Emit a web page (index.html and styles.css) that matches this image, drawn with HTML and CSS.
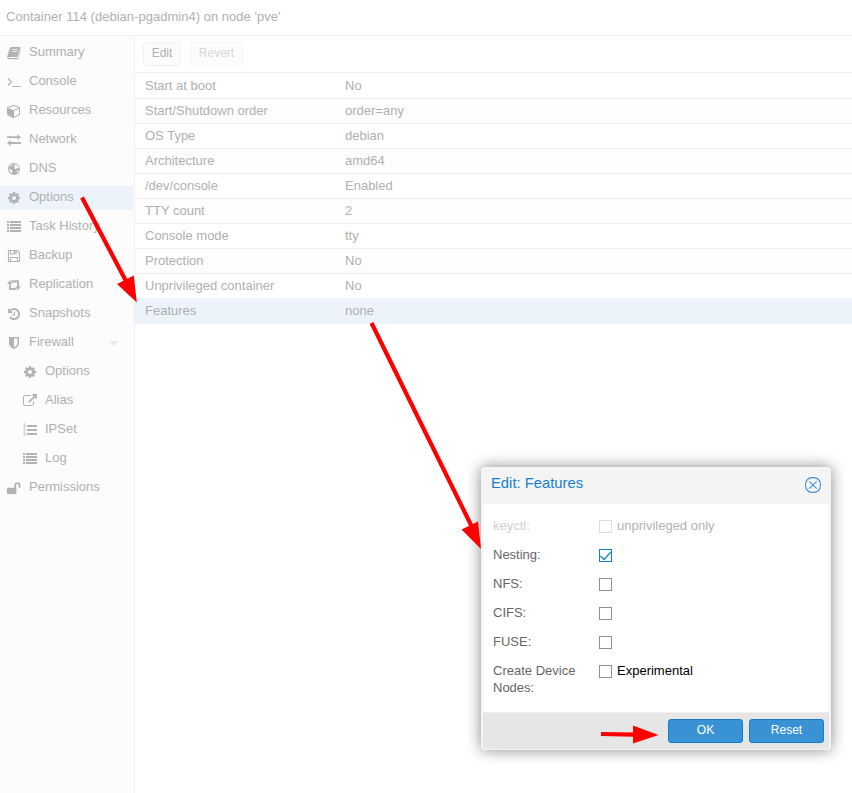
FILE: index.html
```html
<!DOCTYPE html>
<html lang="en">
<head>
<meta charset="utf-8">
<title>Container 114 (debian-pgadmin4) on node 'pve'</title>
<link rel="stylesheet" href="styles.css">
</head>
<body>
<header class="title">Container 114 (debian-pgadmin4) on node 'pve'</header>
<div class="main">
  <nav class="side">
    <a class="item"><svg class="ico" viewBox="0 0 14 14"><path d="M4.600 1h8.200q.8.200.6 1l-2.400 8q-.3.900-1.200.900H2.300q-.9 0-.8.600.1.500.9.500h8q.6 0 .8-.6L13.500 4q.4 0 .2.900l-2.300 7.500q-.3.800-1.200.800H2Q.5 13 .3 11.500V10L2.900 2q.3-1 1.700-1z"/><path class="cut" d="M5.200 3.500h5.600M4.600 5.500h5.600"/></svg>Summary</a>
    <a class="item"><svg class="ico" viewBox="0 0 14 14"><path class="line thin" d="M.8 3.500l3.800 3.500-3.800 3.500M5.500 11.500H13.800"/></svg>Console</a>
    <a class="item"><svg class="ico" viewBox="0 0 1792 1792"><path d="M896 1629l640-349v-636l-640 233v752zm-64-865l698-254-698-254-698 254zm832-252v768q0 35-18 65t-49 47l-704 384q-28 16-61 16t-61-16l-704-384q-31-17-49-47t-18-65v-768q0-40 23-73t61-47l704-256q22-8 44-8t44 8l704 256q38 14 61 47t23 73z"/></svg>Resources</a>
    <a class="item"><svg class="ico" viewBox="0 0 14 14"><path d="M0 3.200h10.500V1.200L14 4l-3.500 2.900V5H0zM14 11H3.500v2L0 10l3.500-2.900v2H14z"/></svg>Network</a>
    <a class="item"><svg class="ico" viewBox="0 0 14 14"><circle cx="7" cy="7" r="6"/><path class="land" d="M7.500 1.800l2.800.9 1.600 2.100-.2 1.500-1.500-.3-1.200 1-1.600-.6-.4-1.500 1.200-1.200-1-.7zM3.200 3.200l1.800-.8.400 1-1.300 1.200zM1.800 6.500l2.500 1.200 1.300 1.500-1 2.600-1.200-.9-.3-1.900-1.300-1.300zM10.200 8.300l1.600.2-.8 1.800-1.300.5z"/></svg>DNS</a>
    <a class="item on"><svg class="ico" viewBox="0 0 1792 1792"><use href="#cog"/></svg>Options</a>
    <a class="item"><svg class="ico" viewBox="0 0 14 14"><use href="#list"/></svg>Task History</a>
    <a class="item"><svg class="ico" viewBox="0 0 14 14"><path class="line" d="M1.500 1.500h8.500L12.500 4V12.500H1.500zM3.500 1.500v3.500h5.500V1.500M3.500 12.500V8.500h7v4"/><path d="M6.500 2h1.500v2.500H6.500z"/></svg>Backup</a>
    <a class="item"><svg class="ico" viewBox="0 0 14 14"><path d="M2.900 2.300L5.800 6H3.900V10h4.700l1.700 2.100H2.500Q2 12.100 2 11.600V6H0zM11.100 12.100L8.200 8.400h1.900V4.400H5.400L3.700 2.300h7.800q.5 0 .5.500v5.600h2z"/></svg>Replication</a>
    <a class="item"><svg class="ico" viewBox="0 0 1792 1792"><path d="M1664 896q0 156-61 298t-164 245-245 164-298 61q-172 0-327-72.500t-264-204.500q-7-10-6.500-22.500t8.500-20.500l137-138q10-9 25-9 16 2 23 12 73 95 179 147t225 52q104 0 198.500-40.500t163.500-109.500 109.500-163.500 40.500-198.500-40.500-198.500-109.500-163.500-163.500-109.500-198.500-40.500q-98 0-188 35.500t-160 101.500l137 138q31 30 14 69-17 40-59 40h-448q-26 0-45-19t-19-45v-448q0-42 40-59 39-17 69 14l130 129q107-101 244.500-156.500t284.500-55.500q156 0 298 61t245 164 164 245 61 298zm-640-288v448q0 14-9 23t-23 9h-320q-14 0-23-9t-9-23v-64q0-14 9-23t23-9h224v-352q0-14 9-23t23-9h64q14 0 23 9t9 23z"/></svg>Snapshots</a>
    <a class="item"><svg class="ico" viewBox="0 0 1792 1792"><path d="M1344 960v-640h-448v1137q119-63 213-137 235-184 235-360zm192-768v768q0 86-33.500 170.500t-83 150-118 127.500-126.500 103-121 77.500-89.500 49.500-42.500 20q-12 6-26 6t-26-6q-16-7-42.500-20t-89.500-49.500-121-77.500-126.500-103-118-127.500-83-150-33.500-170.500v-768q0-26 19-45t45-19h1152q26 0 45 19t19 45z"/></svg>Firewall<i class="caret"></i></a>
    <a class="item sub"><svg class="ico" viewBox="0 0 1792 1792"><use href="#cog"/></svg>Options</a>
    <a class="item sub"><svg class="ico" viewBox="0 0 1792 1792"><path d="M1408 928v320q0 119-84.500 203.500t-203.500 84.500h-832q-119 0-203.500-84.500t-84.500-203.500v-832q0-119 84.500-203.500t203.500-84.500h704q14 0 23 9t9 23v64q0 14-9 23t-23 9h-704q-66 0-113 47t-47 113v832q0 66 47 113t113 47h832q66 0 113-47t47-113v-320q0-14 9-23t23-9h64q14 0 23 9t9 23zm384-864v512q0 26-19 45t-45 19-45-19l-176-176-652 652q-10 10-23 10t-23-10l-114-114q-10-10-10-23t10-23l652-652-176-176q-19-19-19-45t19-45 45-19h512q26 0 45 19t19 45z"/></svg>Alias</a>
    <a class="item sub"><svg class="ico" viewBox="0 0 14 14"><path d="M4 2h10v2H4zM4 6h10v2H4zM4 10h10v2H4z"/><path class="line fine" d="M.4 1L1.500.4v3M.3 3.500h2.400M.3 5.400q1-.8 1.900 0 .3.800-1.900 2.500h2.400M.3 9.900h2.100L1.300 11.300q1.300.1 1.100 1.200-.6 1-2.200.3"/></svg>IPSet</a>
    <a class="item sub"><svg class="ico" viewBox="0 0 14 14"><use href="#list"/></svg>Log</a>
    <a class="item"><svg class="ico" viewBox="0 0 14 14"><path d="M0 7.500q0-.7.700-.7H7.300V4.500Q7.300 1.200 10.400 1.200t3.100 3.300v1.800q0 .5-.5.500h-.8q-.5 0-.5-.5V4.500q0-1.500-1.300-1.500T9.100 4.500V7q.3.200.3.600v4.700q0 .7-.7.700H.7q-.7 0-.7-.7z"/></svg>Permissions</a>
  </nav>
  <section class="content">
    <div class="bar"><span class="tool">Edit</span><span class="tool off">Revert</span></div>
    <div class="grid">
      <div class="row"><span>Start at boot</span><span>No</span></div>
      <div class="row"><span>Start/Shutdown order</span><span>order=any</span></div>
      <div class="row"><span>OS Type</span><span>debian</span></div>
      <div class="row"><span>Architecture</span><span>amd64</span></div>
      <div class="row"><span>/dev/console</span><span>Enabled</span></div>
      <div class="row"><span>TTY count</span><span>2</span></div>
      <div class="row"><span>Console mode</span><span>tty</span></div>
      <div class="row"><span>Protection</span><span>No</span></div>
      <div class="row"><span>Unprivileged container</span><span>No</span></div>
      <div class="row on"><span>Features</span><span>none</span></div>
    </div>
  </section>
</div>

<div class="dialog">
  <div class="head">Edit: Features
    <svg class="close" viewBox="0 0 16 16"><rect x=".6" y=".6" width="14.800" height="14.800" rx="6.500"/><path d="M4.300 4.300l7.400 7.400M11.700 4.300l-7.400 7.400"/></svg>
  </div>
  <div class="form">
    <div class="field off"><label>keyctl:</label><i class="box"></i><span>unprivileged only</span></div>
    <div class="field"><label>Nesting:</label><i class="box checked"><svg viewBox="0 0 11 11"><path d="M.3 6l3.700 3.500L10.900 2"/></svg></i></div>
    <div class="field"><label>NFS:</label><i class="box"></i></div>
    <div class="field"><label>CIFS:</label><i class="box"></i></div>
    <div class="field"><label>FUSE:</label><i class="box"></i></div>
    <div class="field"><label>Create Device Nodes:</label><i class="box"></i><span>Experimental</span></div>
  </div>
  <div class="foot"><span class="btn">OK</span><span class="btn">Reset</span></div>
</div>

<svg class="arrows" viewBox="0 0 852 793">
  <path class="shaft" d="M82 197.500L126.500 282M371.500 323L472.500 528M601 734L635 734.700"/>
  <path d="M117 284L133.800 275.500 136.800 302.500zM461.500 529.500L478 521.500 481 549zM633 725.500L658.500 735 633 743.500z"/>
</svg>

<svg class="defs">
  <defs>
    <path id="cog" d="M1152 896q0-106-75-181t-181-75-181 75-75 181 75 181 181 75 181-75 75-181zm512-109v222q0 12-8 23t-20 13l-185 28q-19 54-39 91 35 50 107 138 10 12 10 25t-9 23q-27 37-99 108t-94 71q-12 0-26-9l-138-108q-44 23-91 38-16 136-29 186-7 28-36 28h-222q-14 0-24.500-8.500t-11.500-21.500l-28-184q-49-16-90-37l-141 107q-10 9-25 9-14 0-25-11-126-114-165-168-7-10-7-23 0-12 8-23 15-21 51-66.500t54-70.500q-27-50-41-99l-183-27q-13-2-21-12.500t-8-23.500v-222q0-12 8-23t19-13l186-28q14-46 39-92-40-57-107-138-10-12-10-24 0-10 9-23 26-36 98.500-107.500t94.500-71.500q13 0 26 10l138 107q44-23 91-38 16-136 29-186 7-28 36-28h222q14 0 24.500 8.500t11.500 21.500l28 184q49 16 90 37l142-107q9-9 24-9 13 0 25 10 129 119 165 170 7 8 7 22 0 12-8 23-15 21-51 66.500t-54 70.500q26 50 41 98l183 28q13 2 21 12.500t8 23.500z"/>
    <path id="list" d="M0 1h2v2H0zM3 1h11v2H3zM0 4h2v2H0zM3 4h11v2H3zM0 7h2v2H0zM3 7h11v2H3zM0 10h2v2H0zM3 10h11v2H3z"/>
  </defs>
</svg>
</body>
</html>
```
FILE: styles.css
```css
* { box-sizing: border-box; }
body {
  margin: 0;
  width: 852px;
  height: 793px;
  position: relative;
  overflow: hidden;
  display: flex;
  flex-direction: column;
  background: #fff;
  color: #b0b0b0;
  font: 13px/17px "Liberation Sans", Arial, sans-serif;
}
.title { height: 36px; padding: 8px 6px; border-bottom: 1px solid #efefef; letter-spacing: .02px; }
.main { flex: 1; display: flex; }
.side {
  width: 135px;
  padding-top: 5px;
  background: #fcfcfc;
  border-right: 1px solid #efefef;
}
.item {
  display: flex;
  height: 24px;
  width: 133px;
  margin-bottom: 5px;
  padding: 2px 0 0 7px;
  white-space: nowrap;
}
.item.on, .row.on { background: #ecf3fa; }
.sub { padding-left: 23px; }
.ico { width: 14px; height: 14px; margin: 3px 8px 0 0; fill: #b3b3b3; flex: none; }
.line { fill: none; stroke: #b3b3b3; stroke-width: 1.1; }
.thin { stroke-width: 1.2; }
.fine { stroke-width: .7; }
.cut { fill: none; stroke: #fcfcfc; stroke-width: .8; }
.land { fill: #f4f4f4; }
.caret {
  margin: 8px 14px 0 auto;
  width: 0;
  height: 0;
  border: 5px solid transparent;
  border-top-color: #ebebeb;
  border-bottom: 0;
}
.content { flex: 1; }
.bar { height: 37px; padding: 6px 8px; display: flex; gap: 9px; border-bottom: 1px solid #efefef; }
.tool {
  width: 38px;
  height: 24px;
  padding-top: 2px;
  border: 1px solid #f1f1f1;
  border-radius: 3px;
  background: #fcfcfc;
  font-size: 12px;
  text-align: center;
}
.tool.off { width: 53px; color: #d7d7d7; border-color: #f6f6f6; }
.row {
  height: 25px;
  padding: 3px 10px 0;
  display: grid;
  grid-template-columns: 200px 1fr;
  border-bottom: 1px solid #efefef;
}
.row:first-child { height: 26px; padding-top: 4px; }
.row:nth-child(even):not(.on) { background: #fdfdfd; }
.row:nth-last-child(2), .row.on { border-color: #ecf3fa; }
.dialog {
  position: absolute;
  left: 481px;
  top: 467px;
  width: 350px;
  height: 283px;
  display: flex;
  flex-direction: column;
  border: 2px solid #f4f4f4;
  border-width: 0 2px 1px;
  border-radius: 4px;
  overflow: hidden;
  background: #fff;
  color: #666;
  box-shadow: 0 0 15px #888;
}
.head {
  height: 37px;
  padding: 7px 8px;
  display: flex;
  justify-content: space-between;
  background: #f4f4f4;
  color: #157fcc;
  font-size: 14.800px;
  line-height: 18px;
}
.close { width: 16px; height: 16px; margin-top: 3px; fill: none; stroke: #4593ce; stroke-width: 1.1; }
.form { flex: 1; padding: 10px; }
.field { height: 29px; display: flex; padding-top: 3px; color: #666; }
.field label { width: 106px; padding-right: 20px; }
.field span { margin-left: 5px; color: #000; }
.field.off, .field.off span { color: #b2b2b2; }
.field.off label { color: #d0d0d0; }
.box { width: 13px; height: 13px; margin-top: 3px; border: 1px solid #919191; flex: none; }
.off .box { border-color: #dedede; }
.box.checked { border-color: #157fcc; }
.box svg { display: block; width: 11px; height: 11px; fill: none; stroke: #157fcc; stroke-width: 1.300; }
.foot {
  height: 37px;
  padding: 6px 5px;
  display: flex;
  justify-content: flex-end;
  gap: 6px;
  background: #e6e6e6;
  border-top: 1px solid #f0f0f0;
}
.btn {
  width: 75px;
  height: 24px;
  padding-top: 2px;
  border: 1px solid #157fcc;
  border-radius: 3px;
  background: #3892d4;
  color: #fff;
  text-align: center;
  font-size: 12px;
}
.arrows { position: absolute; left: 0; top: 0; width: 852px; height: 793px; fill: #f00; }
.shaft { fill: none; stroke: #f00; stroke-width: 4.2; }
.defs { position: absolute; width: 0; height: 0; }
```
